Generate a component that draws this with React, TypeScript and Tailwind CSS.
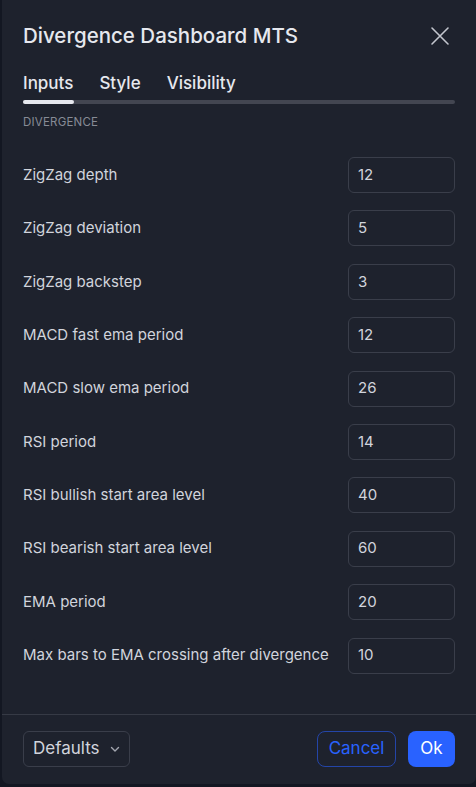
import React from "react"

const inputs: [string, string][] = [
  ["ZigZag depth", "12"],
  ["ZigZag deviation", "5"],
  ["ZigZag backstep", "3"],
  ["MACD fast ema period", "12"],
  ["MACD slow ema period", "26"],
  ["RSI period", "14"],
  ["RSI bullish start area level", "40"],
  ["RSI bearish start area level", "60"],
  ["EMA period", "20"],
  ["Max bars to EMA crossing after divergence", "10"],
]

export default function App() {
  return (
    <div
      className="flex h-[787px] w-[476px] bg-[#131722] text-[#d1d4dc]"
      style={{ fontFamily: "Inter, 'Noto Sans', sans-serif" }}
    >
      <div className="ml-[2px] flex h-[784px] flex-1 flex-col rounded-b-[7px] bg-[#1e222d]">
        <div className="flex items-center justify-between pl-[21px] pr-[26px] pt-[22px]">
          <h1 className="text-[20.5px] font-medium leading-[28px] text-[#e6e8ee]">Divergence Dashboard MTS</h1>
          <svg width="20" height="20" viewBox="0 0 20 20" className="text-[#c3c6ce]">
            <path d="M2 2L18 18M18 2L2 18" stroke="currentColor" strokeWidth="1.6" strokeLinecap="round" />
          </svg>
        </div>

        <div className="px-[21px]">
          <div className="mt-[21px] flex gap-[26px] text-[17px] font-medium leading-[24px] text-[#e6e8ee]">
            <span>Inputs</span>
            <span>Style</span>
            <span>Visibility</span>
          </div>
          <div className="mt-[5px] h-[4px] rounded-full bg-[#434651]">
            <div className="h-full w-[51px] rounded-full bg-[#e6e8ee]" />
          </div>
          <div className="mt-[10px] text-[11.5px] leading-[16px] tracking-[0.2px] text-[#878b96]">DIVERGENCE</div>

          <div className="mt-[27px] flex flex-col gap-[17.4px]">
            {inputs.map(([label, value]) => (
              <div key={label} className="flex h-[36px] items-center justify-between">
                <span className="text-[15px] text-[#d1d4dc]">{label}</span>
                <div className="flex h-[36px] w-[107px] items-center rounded-[6px] border border-[#3a3e4a] pl-[9px] text-[15px] text-[#d1d4dc]">
                  {value}
                </div>
              </div>
            ))}
          </div>
        </div>

        <div className="mt-[40px] h-px bg-[#363a45]" />

        <div className="flex items-center justify-between px-[21px] pt-[16px]">
          <div className="flex h-[36px] w-[107px] items-center justify-between rounded-[6px] border border-[#3a3e4a] pl-[9px] pr-[8px] text-[17px] text-[#d1d4dc]">
            <span>Defaults</span>
            <svg width="12" height="12" viewBox="0 0 12 12" className="text-[#a3a6af]">
              <path d="M2.5 4.5L6 8L9.5 4.5" fill="none" stroke="currentColor" strokeWidth="1.4" strokeLinecap="round" strokeLinejoin="round" />
            </svg>
          </div>
          <div className="flex gap-[12px]">
            <button className="h-[36px] w-[79px] rounded-[8px] border border-[#2445a8] text-[17px] text-[#2962ff]">Cancel</button>
            <button className="h-[36px] w-[47px] rounded-[8px] bg-[#2962ff] text-[17px] text-white">Ok</button>
          </div>
        </div>
      </div>
    </div>
  )
}
